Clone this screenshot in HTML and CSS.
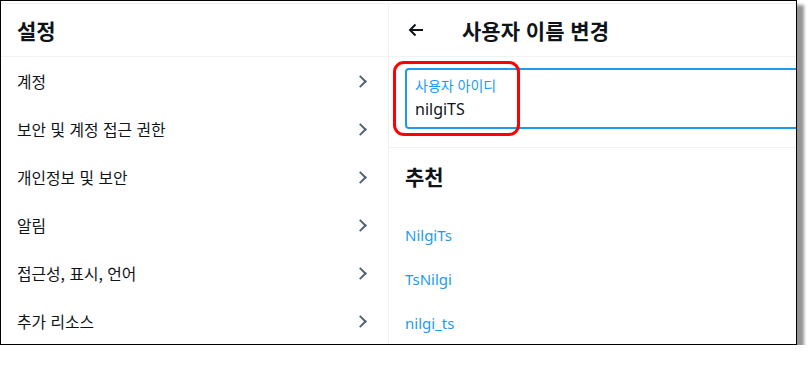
FILE: index.html
```html
<!DOCTYPE html>
<html lang="ko">
<head>
  <meta charset="UTF-8">
  <title>사용자 이름 변경</title>
  <link rel="stylesheet" href="styles.css">
</head>
<body>
  <div class="frame">
    <div class="page">
      <div class="sidebar">
        <div class="header">
          <h2>설정</h2>
        </div>
        <ul class="menu">
          <li>계정<span class="chevron"></span></li>
          <li>보안 및 계정 접근 권한<span class="chevron"></span></li>
          <li>개인정보 및 보안<span class="chevron"></span></li>
          <li>알림<span class="chevron"></span></li>
          <li>접근성, 표시, 언어<span class="chevron"></span></li>
          <li>추가 리소스<span class="chevron"></span></li>
        </ul>
      </div>

      <div class="main">
        <div class="header">
          <svg class="back" width="16" height="14" viewBox="0 0 16 14">
            <path d="M15 7H2M7.5 1.5L2 7l5.5 5.5" fill="none" stroke="#0f1419" stroke-width="2"/>
          </svg>
          <h2>사용자 이름 변경</h2>
        </div>

        <div class="field-section">
          <div class="field">
            <label>사용자 아이디</label>
            <div class="value">nilgiTS</div>
          </div>
          <div class="highlight"></div>
        </div>

        <div class="suggest">
          <h3>추천</h3>
          <a href="#">NilgiTs</a>
          <a href="#">TsNilgi</a>
          <a href="#">nilgi_ts</a>
        </div>
      </div>
    </div>
  </div>
</body>
</html>
```

FILE: styles.css
```css
* {
  margin: 0;
  padding: 0;
  box-sizing: border-box;
}

body {
  background: #fff;
  font-family: "Noto Sans", "Noto Sans CJK KR", sans-serif;
  color: #0f1419;
}

.frame {
  width: 797px;
  height: 345px;
  border: 1px solid #000;
  background: #fff;
  box-shadow: 6px 6px 3px 1px rgba(0, 0, 0, 0.42);
  overflow: hidden;
  padding-top: 2px;
}

.page {
  display: grid;
  grid-template-columns: 388px 1fr;
  height: 100%;
  border-top: 1px solid #eff3f4;
}

.sidebar {
  border-right: 1px solid #eff3f4;
}

.header {
  height: 53px;
  border-bottom: 1px solid #eff3f4;
  display: flex;
  align-items: center;
}

.sidebar .header {
  padding-left: 16px;
}

.header h2 {
  font-size: 21px;
  font-weight: 700;
  font-family: "Noto Sans CJK KR", sans-serif;
}

.menu {
  list-style: none;
}

.menu li {
  height: 48px;
  padding: 0 23px 0 16px;
  display: flex;
  align-items: center;
  justify-content: space-between;
  font-size: 15.8px;
  font-family: "Noto Sans CJK KR", sans-serif;
}

.chevron {
  width: 9px;
  height: 9px;
  border-top: 2px solid #536471;
  border-right: 2px solid #536471;
  transform: rotate(45deg);
}

.main {
  overflow: hidden;
  min-width: 0;
}

.main .header {
  padding-left: 19px;
}

.back {
  margin-right: 38px;
}

.field-section {
  position: relative;
  padding: 11px 16px 0;
  height: 91px;
  border-bottom: 1px solid #eff3f4;
}

.field {
  width: 440px;
  height: 61px;
  border: 2px solid #1d9bf0;
  border-radius: 4px;
  padding: 5px 8px 0;
}

.field label {
  display: block;
  color: #1d9bf0;
  font-size: 14px;
  font-family: "Noto Sans CJK KR", sans-serif;
  line-height: 21px;
}

.field .value {
  font-size: 16px;
  line-height: 27px;
}

.highlight {
  position: absolute;
  left: 4px;
  top: 4px;
  width: 127px;
  height: 75px;
  border: 3px solid #ff0000;
  border-radius: 11px;
}

.suggest {
  padding: 0 16px;
}

.suggest h3 {
  font-size: 21px;
  font-weight: 700;
  font-family: "Noto Sans CJK KR", sans-serif;
  line-height: 56px;
  margin-bottom: 9px;
}

.suggest a {
  display: block;
  color: #1d9bf0;
  text-decoration: none;
  font-size: 15px;
  line-height: 44px;
}
```
